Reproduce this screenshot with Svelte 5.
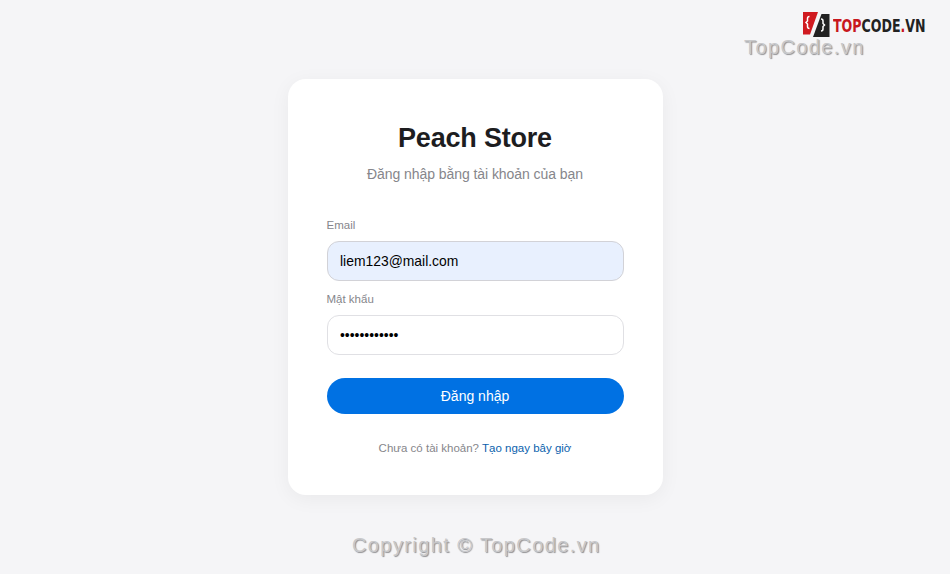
<script>
	let email = $state("liem123@mail.com");
	let password = $state("************");
</script>

<div class="page">
	<form class="card" onsubmit={(e) => e.preventDefault()}>
		<h1>Peach Store</h1>
		<p class="subtitle">Đăng nhập bằng tài khoản của bạn</p>

		<label for="email">Email</label>
		<input id="email" class="filled" type="text" bind:value={email} />

		<label for="password">Mật khẩu</label>
		<input id="password" type="password" bind:value={password} />

		<button type="submit">Đăng nhập</button>

		<p class="signup">Chưa có tài khoản? <a href="#signup">Tạo ngay bây giờ</a></p>
	</form>

	<div class="logo">
		<svg width="29" height="28" viewBox="0 0 29 28">
			<path d="M1 1H16L8 23.5H1Z" fill="#d01a20" />
			<path d="M19.5 3H27.5V26H11Z" fill="#222" />
			<path d="M7.5 5.5Q5.5 5.5 5.5 7.5V10L4 11.5L5.5 13V15.5Q5.5 17.5 7.5 17.5" fill="none" stroke="#fff" stroke-width="1.5" />
			<path d="M19 8Q21 8 21 10V12.5L22.5 14L21 15.5V18Q21 20 19 20" fill="none" stroke="#fff" stroke-width="1.5" />
		</svg>
		<span class="logo-text"><b>TOP</b>CODE<b>.</b>VN</span>
	</div>
	<div class="mark top">TopCode.vn</div>
	<div class="mark bottom">Copyright © TopCode.vn</div>
</div>

<style>
	:global(body) {
		background: #f5f5f7;
	}

	.page {
		position: relative;
		height: 574px;
		display: flex;
		align-items: center;
		justify-content: center;
		font-family: "Liberation Sans", Arial, sans-serif;
		overflow: hidden;
	}

	.card {
		width: 375px;
		height: 416px;
		box-sizing: border-box;
		padding: 41px 39px 0;
		background: #fff;
		border-radius: 18px;
		box-shadow: 0 4px 20px rgba(0, 0, 0, 0.05);
		display: flex;
		flex-direction: column;
	}

	h1 {
		margin: 0;
		height: 36px;
		font-size: 27px;
		line-height: 36px;
		font-weight: 700;
		letter-spacing: -0.2px;
		text-align: center;
		color: #1d1d1f;
	}

	.subtitle {
		margin: 9px 0 34px;
		font-size: 14px;
		line-height: 18px;
		letter-spacing: -0.06px;
		text-align: center;
		color: #86868b;
	}

	label {
		font-size: 11.5px;
		line-height: 16px;
		color: #86868b;
		margin-bottom: 8px;
	}

	input {
		box-sizing: border-box;
		width: 100%;
		height: 40px;
		flex: none;
		padding: 0 12.5px;
		margin-bottom: 10px;
		border: 1px solid #d2d2d7;
		border-radius: 12px;
		background: #fff;
		color: #000;
		font-family: inherit;
		font-size: 13.9px;
		outline: none;
	}

	input.filled {
		background: #e8f0fe;
	}

	input[type="password"] {
		border-color: #e0e0e4;
		margin-bottom: 23px;
	}

	button {
		height: 36px;
		flex: none;
		border: none;
		border-radius: 18px;
		background: #0071e3;
		color: #fff;
		font-family: inherit;
		font-size: 14px;
		cursor: pointer;
	}

	.signup {
		margin: 26px 0 0;
		font-size: 11.5px;
		line-height: 16px;
		text-align: center;
		color: #86868b;
	}

	.signup a {
		color: #0b62ad;
		text-decoration: none;
	}

	.logo {
		position: absolute;
		top: 11px;
		left: 802px;
		display: flex;
		align-items: center;
		gap: 2px;
	}

	.logo-text {
		display: inline-block;
		font-family: "DejaVu Sans", sans-serif;
		font-size: 18px;
		font-weight: 700;
		color: #222;
		transform: scaleX(0.7);
		transform-origin: left center;
	}

	.logo-text b {
		color: #c8171d;
	}

	.mark {
		position: absolute;
		color: #c8c8ca;
		text-shadow: 1px 1px 1px #8f8f92;
		letter-spacing: 1.4px;
		font-size: 20px;
		line-height: 23px;
	}

	.mark.top {
		top: 36px;
		left: 744px;
	}

	.mark.bottom {
		top: 534px;
		left: 352px;
	}
</style>
